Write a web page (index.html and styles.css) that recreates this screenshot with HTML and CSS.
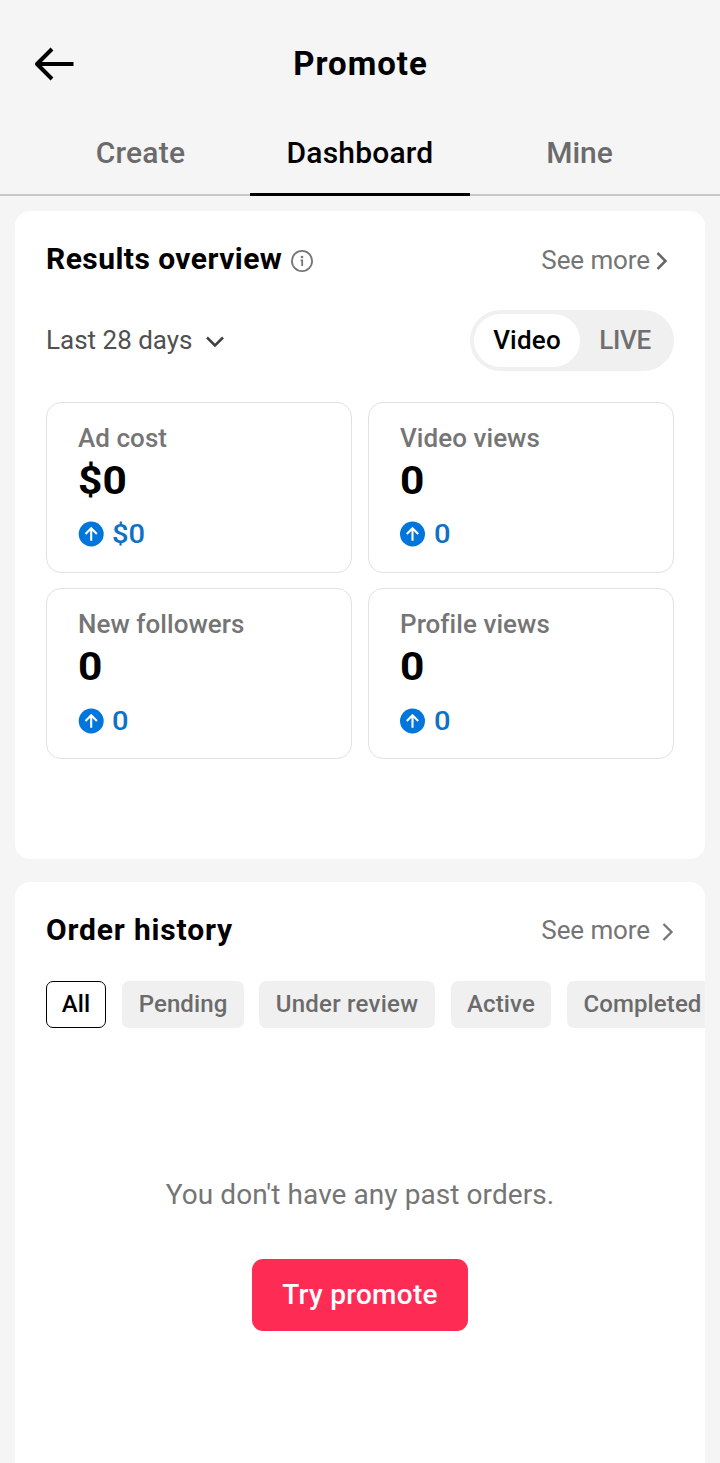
FILE: index.html
```html
<!DOCTYPE html>
<html lang="en">
<head>
<meta charset="utf-8">
<title>Promote</title>
<link rel="stylesheet" href="styles.css">
</head>
<body>
<header class="header">
  <svg class="back" viewBox="0 0 40 34" fill="none" stroke="#000" stroke-width="4" stroke-linejoin="round"><path d="M39.5 17H3M18 2 3 17l15 15"/></svg>
  <h1 class="title">Promote</h1>
</header>
<nav class="tabs">
  <a class="tab create">Create</a>
  <a class="tab active">Dashboard</a>
  <a class="tab mine">Mine</a>
</nav>
<main class="main">
  <section class="panel results">
    <div class="panel-head">
      <h2 class="heading">Results overview</h2>
      <svg class="info" viewBox="0 0 24 24" fill="none" stroke="#757575" stroke-width="1.8"><circle cx="12" cy="12" r="10.1"/><path d="M10.6 11.3h1.6v5.7"/><circle cx="12" cy="8" r="1.3" fill="#757575" stroke="none"/></svg>
      <a class="more">See more</a>
      <svg class="chev" viewBox="0 0 12 18" fill="none" stroke="#666" stroke-width="2.5"><path d="m1.5 1 8 8-8 8"/></svg>
    </div>
    <div class="filters">
      <span class="range">Last 28 days</span>
      <svg class="down" viewBox="0 0 18 12" fill="none" stroke="#404040" stroke-width="2.5"><path d="m1 1.5 8 8 8-8"/></svg>
      <div class="toggle"><span class="seg on">Video</span><span class="seg live">LIVE</span></div>
    </div>
    <div class="grid">
      <article class="stat">
        <p class="label adcost">Ad cost</p><p class="value">$0</p>
        <p class="delta"><svg class="up" viewBox="0 0 26 26"><circle cx="13.2" cy="13" r="12.5" fill="#0075dc"/><path d="M13.2 19.8V8M7.5 13l5.7-5.7 5.7 5.7" fill="none" stroke="#fff" stroke-width="2.1"/></svg><span class="change">$0</span></p>
      </article>
      <article class="stat">
        <p class="label vviews">Video views</p><p class="value">0</p>
        <p class="delta"><svg class="up" viewBox="0 0 26 26"><circle cx="12.5" cy="13" r="12.5" fill="#0075dc"/><path d="M12.5 19.8V8M6.8 13l5.7-5.7 5.7 5.7" fill="none" stroke="#fff" stroke-width="2.1"/></svg><span class="change">0</span></p>
      </article>
      <article class="stat low">
        <p class="label followers">New followers</p><p class="value">0</p>
        <p class="delta"><svg class="up" viewBox="0 0 26 26"><circle cx="13.2" cy="13" r="12.5" fill="#0075dc"/><path d="M13.2 19.8V8M7.5 13l5.7-5.7 5.7 5.7" fill="none" stroke="#fff" stroke-width="2.1"/></svg><span class="change">0</span></p>
      </article>
      <article class="stat low">
        <p class="label pviews">Profile views</p><p class="value">0</p>
        <p class="delta"><svg class="up" viewBox="0 0 26 26"><circle cx="12.5" cy="13" r="12.5" fill="#0075dc"/><path d="M12.5 19.8V8M6.8 13l5.7-5.7 5.7 5.7" fill="none" stroke="#fff" stroke-width="2.1"/></svg><span class="change">0</span></p>
      </article>
    </div>
  </section>
  <section class="panel orders">
    <div class="panel-head">
      <h2 class="heading history">Order history</h2>
      <a class="more">See more</a>
      <svg class="chev far" viewBox="0 0 12 18" fill="none" stroke="#757575" stroke-width="2.3"><path d="m1.5 1 8 8-8 8"/></svg>
    </div>
    <div class="chips">
      <span class="chip all">All</span>
      <span class="chip pending">Pending</span>
      <span class="chip review">Under review</span>
      <span class="chip act">Active</span>
      <span class="chip completed">Completed</span>
    </div>
    <div class="empty">
      <p class="message">You don't have any past orders.</p>
      <button class="cta">Try promote</button>
    </div>
  </section>
</main>
</body>
</html>
```
FILE: styles.css
```css
* { box-sizing: border-box; margin: 0; padding: 0; }
html { overflow: hidden; height: 1463px; }
body { width: 720px; height: 1463px; overflow: hidden; background: #f5f5f5; color: #000; font-family: Roboto, "Noto Sans", sans-serif; display: flex; flex-direction: column; white-space: nowrap; }
svg { display: block; flex: none; }
.header { height: 108px; padding-top: 20px; display: grid; grid-template-columns: 220px 280px 220px; align-items: center; }
.back { width: 40px; height: 34px; margin-left: 34px; }
.title { font-size: 33px; font-weight: 700; text-align: center; letter-spacing: 1px; padding: 0 0 2px 1px; }
.tabs { height: 88px; padding: 0 30px; display: grid; grid-template-columns: 220px 220px 220px; box-shadow: inset 0 -2px #c8c8c8; }
.tab { font-size: 30px; font-weight: 500; line-height: 90px; height: 88px; text-align: center; color: #6b6b6b; letter-spacing: .2px; }
.tab.active { color: #000; border-bottom: 3px solid #000; }
.create { padding-left: 1px; }
.tab.mine { letter-spacing: 0; padding-right: 1px; }
.main { padding: 15px 15px 0; display: flex; flex-direction: column; gap: 23px; flex: 1; }
.panel { background: #fff; border-radius: 15px; padding: 0 31px; flex: none; overflow: hidden; }
.results { height: 648px; }
.orders { height: 581px; border-radius: 15px 15px 0 0; }
.panel-head { height: 96px; display: flex; align-items: center; }
.heading { font-size: 30px; font-weight: 700; letter-spacing: .45px; padding-bottom: 2px; }
.history { letter-spacing: .83px; }
.info { width: 24px; height: 24px; margin: 4px 0 0 8px; }
.more { font-size: 26px; color: #757575; margin-left: auto; margin-top: 2px; letter-spacing: -.1px; }
.orders .more { margin-top: 0; }
.chev { width: 12px; height: 18px; margin: 4px 6px 0 6px; }
.chev.far { margin-left: 12px; margin-right: 0; }
.filters { height: 66px; display: flex; align-items: center; }
.range { font-size: 26px; color: #505050; }
.down { width: 18px; height: 12px; margin: 3px 0 0 13px; }
.toggle { margin-left: auto; width: 204px; height: 61px; border-radius: 31px; background: #f0f0f0; padding: 4px; display: flex; font-size: 26px; font-weight: 500; line-height: 53px; text-align: center; }
.seg { width: 106px; letter-spacing: .2px; }
.seg.on { background: #fff; border-radius: 27px; }
.seg.live { width: 90px; color: #6f6f6f; letter-spacing: -.3px; }
.grid { margin-top: 29px; display: grid; grid-template-columns: 306px 306px; grid-auto-rows: 171px; gap: 15px 16px; }
.stat { border: 1px solid #e1e1e1; border-radius: 15px; padding: 19px 31px 0; }
.label { font-size: 26px; line-height: 32px; font-weight: 500; color: #757575; letter-spacing: .05px; font-variant-ligatures: none; }
.value { font-size: 39px; line-height: 48px; font-weight: 700; margin-top: 3px; transform: scaleX(1.09); transform-origin: 0 50%; }
.delta { display: flex; align-items: center; gap: 8px; font-size: 26px; line-height: 32px; font-weight: 500; color: #0f70c7; margin-top: 13px; }
.low .delta { margin-top: 14px; }
.change { transform: scaleX(1.12); transform-origin: 0 50%; }
.up { width: 26px; height: 26px; }
.chips { display: flex; margin-top: 3px; }
.chip { flex: none; height: 47px; line-height: 46px; border-radius: 7px; background: #f0f0f0; color: #6b6b6b; font-size: 24px; font-weight: 500; text-align: center; letter-spacing: .1px; }
.all { width: 60px; margin-right: 16px; border: 1px solid #000; background: #fff; color: #000; line-height: 44px; }
.pending { width: 122px; margin-right: 15px; }
.review { width: 176px; margin-right: 16px; letter-spacing: .25px; }
.act { width: 100px; margin-right: 16px; }
.completed { width: 151px; }
.empty { display: flex; flex-direction: column; align-items: center; padding-top: 147px; }
.message { font-size: 28px; line-height: 40px; color: #757575; letter-spacing: .07px; }
.cta { margin-top: 44px; width: 216px; height: 72px; border: 0; border-radius: 11px; background: #fe2c55; color: #fff; font: 500 28px/72px Roboto, "Noto Sans", sans-serif; letter-spacing: .25px; }
```
